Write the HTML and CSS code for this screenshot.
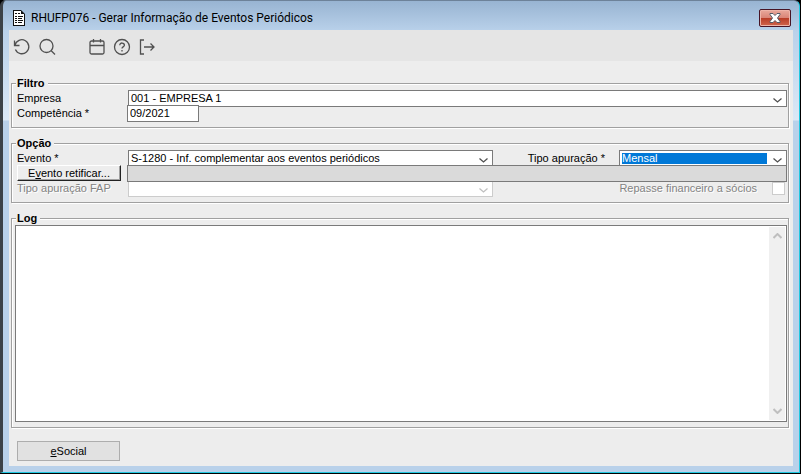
FILE: index.html
```html
<!DOCTYPE html>
<html lang="pt-BR">
<head>
    <meta charset="UTF-8">
    <title>RHUFP076 - Gerar Informação de Eventos Periódicos</title>
    <link rel="stylesheet" href="styles.css">
</head>
<body>
    <div class="window">
        <header class="titlebar">
            <svg class="app-icon" width="12" height="16" viewBox="0 0 12 16">
                <path d="M0 0h8l4 4v12H0z" fill="#111"/>
                <path d="M1 1h7v3h3v11H1z" fill="#fff"/>
                <path d="M2 3.500h2M5 3.500h2M2 6.500h2M5 6.500h5M2 8.500h2M5 8.500h4M2 10.500h2M5 10.500h5M2 12.500h2M5 12.500h4" stroke="#111"/>
            </svg>
            <h1>RHUFP076 - Gerar Informação de Eventos Periódicos</h1>
            <button type="button" class="close" aria-label="Fechar">
                <svg width="12" height="10" viewBox="0 0 12 10">
                    <path d="M1 .5h3l2 2 2-2h3v1L8.500 5l2.500 3.500v1H8l-2-2-2 2H1v-1L3.500 5 1 1.500z" fill="#fff" stroke="#555b66"/>
                </svg>
            </button>
        </header>

        <main class="client">
            <div class="toolbar">
                <button type="button" aria-label="Desfazer">
                    <svg width="18" height="18" viewBox="0 0 18 18"><path d="M1.500 2.500v5h5M2 7.200a7 7 0 1 1 .4 4.300"/></svg>
                </button>
                <button type="button" aria-label="Pesquisar">
                    <svg width="18" height="18" viewBox="0 0 18 18"><circle cx="8.500" cy="8" r="6.500"/><path d="M13 12.500l4 4"/></svg>
                </button>
                <span class="spacer"></span>
                <button type="button" aria-label="Calendário">
                    <svg width="18" height="18" viewBox="0 0 18 18"><rect x="2" y="3" width="14" height="13" rx="1.500"/><path d="M2 7.500h14M5.500 1v3.500M12.500 1v3.500"/></svg>
                </button>
                <button type="button" aria-label="Ajuda">
                    <svg width="18" height="18" viewBox="0 0 18 18"><circle cx="9" cy="9" r="7.500"/><path d="M6.800 7.200c0-3 4.600-2.800 4.600 0 0 1.600-2.400 1.700-2.400 3.200M9 12v1.400"/></svg>
                </button>
                <button type="button" aria-label="Sair">
                    <svg width="18" height="18" viewBox="0 0 18 18"><path d="M6 2H2.500v14H6M6 9h10M12.500 5.500L16 9l-3.500 3.500"/></svg>
                </button>
            </div>

            <form class="content">
                <fieldset>
                    <legend>Filtro</legend>
                    <div class="row">
                        <label for="empresa">Empresa</label>
                        <div class="combo wide">
                            <select id="empresa"><option>001 - EMPRESA 1</option></select>
                            <svg width="9" height="5" viewBox="0 0 9 5"><path d="M.5.5l4 3.500 4-3.500"/></svg>
                        </div>
                    </div>
                    <div class="row">
                        <label for="competencia">Competência *</label>
                        <input type="text" id="competencia" class="date" value="09/2021">
                    </div>
                </fieldset>

                <fieldset>
                    <legend>Opção</legend>
                    <div class="row">
                        <label for="evento">Evento *</label>
                        <div class="combo">
                            <select id="evento"><option>S-1280 - Inf. complementar aos eventos periódicos</option></select>
                            <svg width="9" height="5" viewBox="0 0 9 5"><path d="M.5.5l4 3.500 4-3.500"/></svg>
                        </div>
                        <label for="apuracao" class="right">Tipo apuração *</label>
                        <div class="combo focused">
                            <select id="apuracao"><option>Mensal</option></select>
                            <svg width="9" height="5" viewBox="0 0 9 5"><path d="M.5.5l4 3.500 4-3.500"/></svg>
                        </div>
                    </div>
                    <div class="row">
                        <button type="button" class="retificar">E<u>v</u>ento retificar...</button>
                        <input type="text" class="readonly wide" aria-label="Evento a retificar" readonly>
                    </div>
                    <div class="row disabled">
                        <label for="fap">Tipo apuração FAP</label>
                        <div class="combo">
                            <select id="fap" disabled><option></option></select>
                            <svg width="9" height="5" viewBox="0 0 9 5"><path d="M.5.5l4 3.500 4-3.500"/></svg>
                        </div>
                        <div class="repasse">
                            <label for="repasse">Repasse financeiro a sócios</label>
                            <input type="checkbox" id="repasse" disabled>
                        </div>
                    </div>
                </fieldset>

                <fieldset class="log">
                    <legend>Log</legend>
                    <div class="log-box">
                        <textarea aria-label="Log" readonly></textarea>
                        <div class="scroll">
                            <svg width="9" height="6" viewBox="0 0 9 6"><path d="M.5 5l4-4 4 4"/></svg>
                            <svg width="9" height="6" viewBox="0 0 9 6"><path d="M.5 1l4 4 4-4"/></svg>
                        </div>
                    </div>
                </fieldset>

                <button type="button" class="esocial"><u>e</u>Social</button>
            </form>
        </main>
    </div>
</body>
</html>
```

FILE: styles.css
```css
* {
    box-sizing: border-box;
}
body {
    display: flex;
    height: 100vh;
    margin: 0;
    padding: 0 1px 1px 0;
    background-color: #000;
    color: #000;
    font-family: "Liberation Sans", Arial, sans-serif;
    font-size: 11px;
}
button, input, select, textarea {
    margin: 0;
    font: inherit;
    color: inherit;
    border-radius: 0;
    outline: none;
}
.window {
    flex: 1;
    display: flex;
    flex-direction: column;
    padding: 0 6px 6px;
    border: 1px solid #20c8e0;
    border-width: 1px 1px 1px 3px;
    border-color: #6d8299 #20c8e0 #20c8e0 #3c4248;
    border-radius: 6px 6px 0 0;
    background: linear-gradient(#98b4d2, #b9d1ea 30px, #dbe8f6 119px, #b9d1ea 120px);
}
.titlebar {
    display: flex;
    align-items: center;
    height: 29px;
    padding: 5px 2px 0 4px;
    gap: 6px;
}
.titlebar h1 {
    flex: 1;
    margin: 0;
    font: 12px Roboto, sans-serif;
}
.close {
    display: flex;
    align-items: center;
    justify-content: center;
    width: 32px;
    height: 18px;
    padding: 0;
    border: 1px solid #471425;
    border-radius: 2px;
    background: linear-gradient(#e9a99c, #d98476 8px, #b83c26 8px, #d0654c);
    box-shadow: inset 0 0 0 1px #eeb4a8;
}
.client {
    flex: 1;
    display: flex;
    flex-direction: column;
    background-color: #ededed;
}
.toolbar {
    display: flex;
    align-items: center;
    gap: 7px;
    height: 31px;
    padding: 3px 4px 0;
    background-color: #e5e5e5;
}
.toolbar button {
    display: flex;
    padding: 0;
    border: none;
    background: none;
}
.toolbar svg {
    fill: none;
    stroke: #505050;
    stroke-width: 1.3;
}
.spacer {
    width: 18px;
}
.content {
    flex: 1;
    display: flex;
    flex-direction: column;
    gap: 8px;
    padding: 15px 4px 5px 2px;
}
fieldset {
    min-width: 0;
    margin: 0;
    padding: 0 1px 7px 5px;
    border: 1px solid #a0a0a0;
    box-shadow: 1px 1px 0 #fff, inset 1px 1px 0 #fff;
}
legend {
    height: 14px;
    margin-left: -1px;
    padding: 0 3px 0 1px;
    background-color: #ededed;
    font-weight: bold;
    line-height: 14px;
}
.row {
    display: grid;
    grid-template-columns: 110px minmax(0, 1fr) 126px 168px;
    height: 15px;
    line-height: 17px;
}
.wide {
    grid-column: 2 / -1;
}
.right {
    padding-right: 14px;
    text-align: right;
}
.combo {
    display: grid;
    height: 17px;
    margin-left: 1px;
    border: 1px solid #7a7a7a;
    background-color: #fff;
}
.combo select {
    grid-area: 1 / 1;
    width: 100%;
    padding: 0 2px;
    border: none;
    background: none;
    line-height: 15px;
    appearance: none;
}
.combo svg {
    grid-area: 1 / 1;
    place-self: center end;
    margin: 3px 4px 0;
    pointer-events: none;
}
.combo path {
    fill: none;
    stroke: #505050;
    stroke-width: 1.3;
}
.combo.focused {
    margin-left: 0;
}
.combo.focused select {
    width: calc(100% - 21px);
    height: 11px;
    margin: 2px;
    padding: 0;
    background-color: #0078d7;
    color: #fff;
    line-height: 11px;
}
.date, .readonly {
    z-index: 1;
    height: 17px;
    padding: 0 2px;
    border: 1px solid #7a7a7a;
}
.date {
    width: 72px;
    background-color: #fff;
}
.readonly {
    background-color: #dadada;
}
.retificar {
    width: 104px;
    height: 16px;
    padding: 0;
    border: 1px solid;
    border-color: #fff #222 #222 #fff;
    background-color: #ededed;
    box-shadow: inset -1px -1px 0 #a0a0a0;
    line-height: 14px;
}
.disabled {
    color: #838383;
    text-shadow: 1px 1px 0 #fff;
}
.disabled .combo {
    border-color: #ccc;
}
.disabled .combo path {
    stroke: #bfbfbf;
}
.repasse {
    grid-column: 3 / -1;
    display: flex;
    justify-content: flex-end;
    gap: 15px;
}
.repasse input {
    width: 13px;
    height: 13px;
    margin: 2px 2px 0 0;
    border: 1px solid #ccc;
    background-color: #fff;
    appearance: none;
}
.log {
    flex: 1;
    display: flex;
    padding: 0 1px 5px 3px;
}
.log legend {
    margin-left: 1px;
}
.log-box {
    flex: 1;
    display: flex;
    padding: 1px;
    border: 1px solid #7a7a7a;
    background-color: #fff;
}
.log-box textarea {
    flex: 1;
    padding: 2px;
    border: none;
    resize: none;
}
.scroll {
    display: flex;
    flex-direction: column;
    align-items: center;
    justify-content: space-between;
    width: 16px;
    padding: 6px 0;
    background-color: #f0f0f0;
}
.scroll path {
    fill: none;
    stroke: #bfbfbf;
    stroke-width: 2;
}
.esocial {
    width: 103px;
    height: 20px;
    margin: 5px 0 0 6px;
    padding: 0;
    border: 1px solid #adadad;
    background-color: #e1e1e1;
}
```
